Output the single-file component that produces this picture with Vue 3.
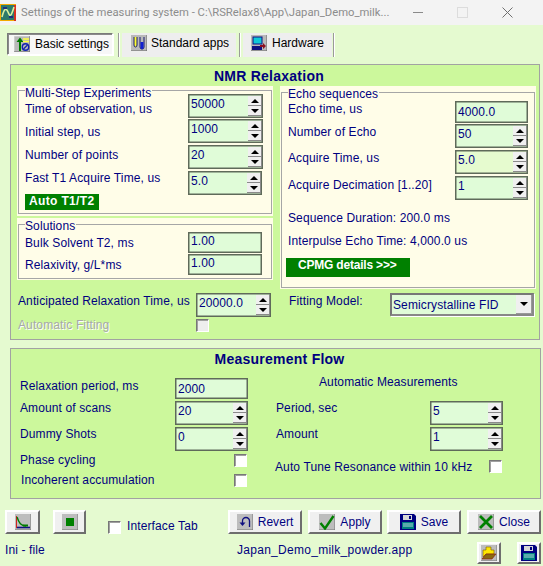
<script setup>
const multi = [
  { v: '50000', c: 'tight' },
  { v: '1000', c: '' },
  { v: '20', c: '' },
  { v: '5.0', c: 'narrow' }
]
const echo = [
  { l: 'Number of Echo', v: '50', c: '' },
  { l: 'Acquire Time, us', v: '5.0', c: 'yellowish' },
  { l: 'Acquire Decimation [1..20]', v: '1', c: 'low' }
]
</script>

<template>
  <div class="win">
    <header class="titlebar">
      <svg class="appicon" width="16" height="17" viewBox="0 0 16 17">
        <rect x="0" y="0" width="16" height="17" fill="#f2a900" />
        <rect x="1" y="1" width="14" height="15" fill="#2d7a6a" />
        <rect x="14" y="1" width="2" height="16" fill="#d83020" />
        <path d="M2 13 C4 5 6 3 8 8 S11 13 14 3" fill="none" stroke="#d9f0a0" stroke-width="1.6" />
        <path d="M3 4h4M9 13h4" stroke="#1c2f80" stroke-width="2" />
      </svg>
      <span class="title-text">Settings of the measuring system - C:\RSRelax8\App\Japan_Demo_milk...</span>
      <i class="wc-min"></i>
      <i class="wc-max"></i>
      <svg class="wc-close" width="11" height="11" viewBox="0 0 11 11"><path d="M.5.5l10 10M10.5.5l-10 10" stroke="#6f6f6f" fill="none" /></svg>
    </header>

    <nav class="tabs">
      <div class="tab active">
        <svg class="ico" viewBox="0 0 16 16">
          <rect width="16" height="16" fill="#b9b9b9" /><path d="M0 16V0h16" fill="none" stroke="#dedede" /><path d="M16 0v16H0" fill="none" stroke="#6b6b6b" />
          <path d="M5 15V6H2.500L6 1.500 9.500 6H7v9z" fill="#007a00" />
          <path d="M9 3h6M9 5.500h6" stroke="#ffff40" stroke-width="1.400" />
          <circle cx="11.500" cy="11" r="3.200" fill="none" stroke="#1020b0" stroke-width="1.400" /><path d="M9.500 13l4-4" stroke="#1020b0" stroke-width="1.200" />
        </svg>
        <span>Basic settings</span>
      </div>
      <i class="tabsep s1"></i>
      <div class="tab std">
        <svg class="ico" viewBox="0 0 16 16">
          <rect width="16" height="16" fill="#b9b9b9" /><path d="M16 0v16H0" fill="none" stroke="#6b6b6b" />
          <path d="M3 2v8a1.500 2 0 0 0 3 0V2" fill="#ffff30" stroke="#1a1a70" />
          <path d="M9 2v10a2 2 0 0 0 4 0V2" fill="none" stroke="#1a1a70" />
          <path d="M9.500 7h3v6l-1.500 1.500L9.500 13z" fill="#1020d0" />
        </svg>
        <span>Standard apps</span>
      </div>
      <i class="tabsep s2"></i>
      <div class="tab hw">
        <svg class="ico" viewBox="0 0 16 16">
          <rect width="16" height="16" fill="#b9b9b9" /><path d="M16 0v16H0" fill="none" stroke="#6b6b6b" />
          <rect x="2" y="2" width="9" height="7" fill="#10c8d8" stroke="#101080" />
          <rect x="1" y="11" width="10" height="4" fill="#101080" />
          <path d="M9 10h3V8l3 3-3 3v-2H9z" fill="#8a1020" />
        </svg>
        <span>Hardware</span>
      </div>
      <i class="tabsep s3"></i>
    </nav>

    <section class="panel relax">
      <h2 class="ptitle nmr">NMR Relaxation</h2>
      <div class="groups">
        <div class="leftgroups">
          <div class="group g-multi">
            <div class="fs multi">
              <div class="col-labels">
                <div class="legend l5">Multi-Step Experiments</div>
                <div class="lbl">Time of observation, us</div>
                <div class="lbl">Initial step, us</div>
                <div class="lbl">Number of points</div>
                <div class="lbl">Fast T1 Acquire Time, us</div>
                <div class="gbtn auto">Auto T1/T2</div>
              </div>
              <div class="col-spins">
                <div v-for="s in multi" :key="s.v" class="spin" :class="s.c">
                  <span class="val">{{ s.v }}</span>
                  <div class="arrows"><b class="up"></b><b class="down"></b></div>
                </div>
              </div>
            </div>
          </div>
          <div class="group g-sol">
            <div class="fs sol">
              <div class="col-labels">
                <div class="legend l6">Solutions</div>
                <div class="lbl">Bulk Solvent T2, ms</div>
                <div class="lbl">Relaxivity, g/L*ms</div>
              </div>
              <div class="col-fields">
                <div class="field"><span class="val">1.00</span></div>
                <div class="field"><span class="val">1.00</span></div>
              </div>
            </div>
          </div>
        </div>

        <div class="group g-echo">
          <div class="fs echo">
            <div class="legend l6">Echo sequences</div>
            <div class="echo-grid">
              <div class="lbl e1">Echo time, us</div>
              <div class="field ef"><span class="val">4000.0</span></div>
              <template v-for="e in echo" :key="e.l">
                <div class="lbl" :class="e.c === 'low' ? 'e2' : 'e1'">{{ e.l }}</div>
                <div class="spin wide" :class="e.c">
                  <span class="val">{{ e.v }}</span>
                  <div class="arrows"><b class="up"></b><b class="down"></b></div>
                </div>
              </template>
            </div>
            <div class="lbl seq">Sequence Duration: 200.0 ms</div>
            <div class="lbl inter">Interpulse Echo Time: 4,000.0 us</div>
            <div class="gbtn cpmg">CPMG details &gt;&gt;&gt;</div>
          </div>
        </div>
      </div>

      <div class="under">
        <div class="under-left">
          <div class="lbl a1">Anticipated Relaxation Time, us</div>
          <div class="spin">
            <span class="val">20000.0</span>
            <div class="arrows"><b class="up"></b><b class="down"></b></div>
          </div>
          <div class="lbl disabled">Automatic Fitting</div>
          <i class="chk dis"></i>
        </div>
        <div class="under-right">
          <div class="lbl fit">Fitting Model:</div>
          <div class="combo">
            <span>Semicrystalline FID</span>
            <b class="combo-btn"><i class="tri"></i></b>
          </div>
        </div>
      </div>
    </section>

    <section class="panel flow">
      <h2 class="ptitle ft">Measurement Flow</h2>
      <div class="flow-cols">
        <div class="flow-left">
          <div class="lbl t1">Relaxation period, ms</div>
          <div class="field f21"><span class="val">2000</span></div>
          <div class="lbl">Amount of scans</div>
          <div class="spin wide"><span class="val">20</span><div class="arrows"><b class="up"></b><b class="down"></b></div></div>
          <div class="lbl">Dummy Shots</div>
          <div class="spin wide"><span class="val">0</span><div class="arrows"><b class="up"></b><b class="down"></b></div></div>
          <div class="lbl">Phase cycling</div>
          <i class="chk endr"></i>
          <div class="lbl botm">Incoherent accumulation</div>
          <i class="chk endr"></i>
        </div>
        <div class="flow-right">
          <div class="lbl am-head">Automatic Measurements</div>
          <div class="am-grid">
            <div class="lbl">Period, sec</div>
            <div class="spin wide"><span class="val">5</span><div class="arrows"><b class="up"></b><b class="down"></b></div></div>
            <div class="lbl">Amount</div>
            <div class="spin wide"><span class="val">1</span><div class="arrows"><b class="up"></b><b class="down"></b></div></div>
          </div>
          <div class="tune">
            <span class="lbl">Auto Tune Resonance within 10 kHz</span>
            <i class="chk"></i>
          </div>
        </div>
      </div>
    </section>

    <div class="actions">
      <div class="btn b-chart">
        <svg class="ico" viewBox="0 0 16 16">
          <rect width="16" height="16" fill="#bdbdbd" /><path d="M16 0v16H0" fill="none" stroke="#777" />
          <path d="M1.500 13.500H15" stroke="#101080" stroke-width="1.600" />
          <path d="M1.500 2v12" stroke="#d02020" />
          <path d="M2 3 C4 9 6 12 11 12" fill="none" stroke="#007a00" stroke-width="1.400" />
          <path d="M8 11.500h5" stroke="#007a00" stroke-width="2" />
        </svg>
      </div>
      <div class="btn b-stop">
        <svg class="ico" viewBox="0 0 16 16">
          <rect width="16" height="16" fill="#bdbdbd" /><path d="M16 0v16H0" fill="none" stroke="#777" />
          <rect x="4" y="4" width="8" height="8" fill="#008000" />
        </svg>
      </div>
      <label class="itab"><i class="chk"></i><span class="lbl">Interface Tab</span></label>
      <div class="btn act revert">
        <svg class="ico" viewBox="0 0 16 16">
          <rect width="16" height="16" fill="#bdbdbd" /><path d="M16 0v16H0" fill="none" stroke="#777" />
          <path d="M12.500 13V7a3.500 3.500 0 0 0-7 0v2" fill="none" stroke="#101080" stroke-width="1.300" />
          <path d="M2.500 8.500h6L5.500 12z" fill="#101080" />
        </svg>
        <span>Revert</span>
      </div>
      <div class="btn act apply">
        <svg class="ico" viewBox="0 0 16 16">
          <rect width="16" height="16" fill="#bdbdbd" /><path d="M16 0v16H0" fill="none" stroke="#777" />
          <path d="M1.500 9l4.500 5.500L14.500 2" fill="none" stroke="#008000" stroke-width="2.400" />
        </svg>
        <span>Apply</span>
      </div>
      <div class="btn act save">
        <svg class="ico" viewBox="0 0 16 16">
          <path d="M0 0h14l2 2v14H0z" fill="#000080" />
          <rect x="3" y="1" width="9" height="5" fill="#d8d8d8" />
          <rect x="9" y="2" width="2" height="3" fill="#000080" />
          <rect x="2" y="8" width="12" height="7" fill="#008080" />
          <path d="M3 10h10M3 12h10" stroke="#b0d8d8" />
        </svg>
        <span>Save</span>
      </div>
      <div class="btn act close">
        <svg class="ico" viewBox="0 0 16 16">
          <rect width="16" height="16" fill="#bdbdbd" /><path d="M16 0v16H0" fill="none" stroke="#777" />
          <path d="M2 2l12 12M14 2L2 14" stroke="#008000" stroke-width="2.800" />
        </svg>
        <span>Close</span>
      </div>
    </div>

    <div class="footer">
      <span class="lbl ini">Ini - file</span>
      <span class="lbl fname">Japan_Demo_milk_powder.app</span>
      <div class="btn small first">
        <svg class="ico" viewBox="0 0 16 16">
          <rect width="16" height="16" fill="#bdbdbd" /><path d="M16 0v16H0" fill="none" stroke="#777" />
          <path d="M2 12V5h3V2h5v3h3v4H5z" fill="#ffe800" stroke="#7a5a00" stroke-width=".6" />
          <path d="M1 14l4-5h10l-4 5z" fill="#8a6a10" stroke="#8a1010" stroke-width=".6" />
        </svg>
      </div>
      <div class="btn small">
        <svg class="ico" viewBox="0 0 16 16">
          <path d="M0 0h14l2 2v14H0z" fill="#000080" />
          <rect x="3" y="1" width="9" height="5" fill="#d8d8d8" />
          <rect x="9" y="2" width="2" height="3" fill="#000080" />
          <rect x="2" y="8" width="12" height="7" fill="#008080" />
          <path d="M3 10h10M3 12h10" stroke="#b0d8d8" />
        </svg>
      </div>
    </div>
  </div>
</template>

<style scoped>
.win {
  width: 543px;
  height: 566px;
  overflow: hidden;
  background: #e5fad0;
  font: 12px/14px "Liberation Sans", Arial, sans-serif;
  color: #000080;
}
.titlebar {
  height: 25px;
  background: #f3f3f3;
  display: flex;
  align-items: center;
  color: #8c8c8c;
}
.appicon { margin: 0 5px 0 0; flex: none; }
.title-text { font: 11.25px Roboto, sans-serif; width: 392px; white-space: nowrap; }
.wc-min { width: 10px; height: 1px; background: #8a8a8a; margin-left: 0; }
.wc-max { width: 9px; height: 9px; border: 1px solid #dcdcdc; margin-left: 34px; }
.wc-close { margin-left: 34px; }

.tabs { height: 39px; display: flex; align-items: flex-start; padding: 8px 0 0 7px; box-sizing: border-box; color: #000; }
.tab { display: flex; align-items: center; box-sizing: border-box; background: #eeeeee; white-space: nowrap; flex: none; }
.tab.active { width: 106px; height: 22px; padding-left: 6px; gap: 5px; background: #f7f7f7; border: 1px solid #7a7a7a; border-right-color: #fff; border-bottom-color: #fff; box-shadow: inset 1px 1px 0 #8a8a8a, 1px 1px 0 #fff; }
.tab.std { width: 114px; height: 24px; padding-left: 9px; gap: 4px; }
.tab.hw { width: 89px; height: 24px; padding-left: 8px; gap: 5px; }
.tab.std, .tab.hw { align-items: flex-start; padding-top: 2px; }
.tab.std span, .tab.hw span { line-height: 16px; }
.tabsep { width: 1px; height: 24px; background: #9a9a9a; border-right: 1px solid #fff; flex: none; }
.s1 { margin: 0 2px 0 5px; }
.s2 { margin: 0 2px 0 3px; }
.s3 { margin: 0 0 0 1px; }
.ico { width: 16px; height: 16px; flex: none; }

.panel {
  box-sizing: border-box;
  border: 1px solid #a2a2a2;
  background: #ccf89c;
  margin-left: 10px;
}
.relax { width: 530px; height: 276px; }
.flow { width: 531px; height: 151px; margin-top: 8px; }
.ptitle { margin: 0; font: bold 14px/21px "Liberation Sans", Arial, sans-serif; text-align: center; letter-spacing: .25px; }
.nmr { padding-right: 12px; height: 21px; line-height: 23px; }

.groups { display: grid; grid-template-columns: 256px 256px; gap: 7px; padding-left: 6px; height: 203px; }
.leftgroups { display: flex; flex-direction: column; gap: 2px; }
.group { background: #fffde8; box-sizing: border-box; padding: 4px 1px 2px; display: flex; }
.g-multi { height: 130px; }
.g-sol { height: 62px; padding-top: 6px; padding-bottom: 1px; }
.g-echo { height: 203px; padding-top: 6px; padding-bottom: 1px; }
.fs { border: 1px solid #a6a6a6; flex: 1; box-sizing: border-box; min-width: 0; }
.legend { width: fit-content; background: #fffde8; padding-right: 1px; letter-spacing: .1px; }
.l5 { margin-top: -5px; }
.l6 { margin-top: -6px; }
.lbl { letter-spacing: .12px; white-space: nowrap; }
.lbl.fname { letter-spacing: .28px; }

.multi { display: grid; padding-left: 6px; grid-template-columns: 163px 75px; }
.col-labels { display: flex; flex-direction: column; gap: 9px; }
.multi .legend { margin-bottom: -7px; }
.col-spins { display: flex; flex-direction: column; gap: 2px; padding-top: 3px; }
.spin, .field {
  box-sizing: border-box;
  display: flex;
  background: #e0fcd8;
  border: 1px solid #5f6a5a;
  box-shadow: inset 0 0 0 .5px #5f6a5a;
  height: 24px;
  width: 75px;
  color: #000080;
}
.spin.tight { margin-bottom: -1px; }
.spin.narrow { width: 74px; }
.spin.wide { width: 73px; }
.spin.yellowish { background: #e6fbcf; }
.val { flex: 1; padding-left: 2px; line-height: 19px; letter-spacing: .1px; }
.arrows { display: flex; flex-direction: column; width: 14px; gap: 0; padding-top: 1px; }
.arrows b { height: 10px; width: 14px; background: #f0f0f0; border-right: 1px solid #8a8a8a; border-bottom: 1px solid #8a8a8a; box-sizing: border-box; display: flex; align-items: center; justify-content: center; }
.arrows b::after { content: ""; border-left: 4px solid transparent; border-right: 4px solid transparent; }
.arrows .up::after { border-bottom: 4px solid #000; }
.arrows .down::after { border-top: 4px solid #000; }

.gbtn { background: #008000; color: #fff; font-weight: bold; box-sizing: border-box; }
.auto { width: 74px; height: 16px; line-height: 14px; padding-left: 4px; letter-spacing: .35px; }

.sol { display: grid; grid-template-columns: 163px 74px; padding-left: 6px; }
.sol .legend { margin-bottom: -5px; }
.sol .col-labels { gap: 8px; }
.col-fields { display: flex; flex-direction: column; gap: 1px; padding-top: 7px; }
.field { height: 21px; width: 74px; }
.col-fields .val { line-height: 17px; }

.echo { padding-left: 6px; }
.echo-grid { display: grid; grid-template-columns: 167px 73px; grid-template-rows: 21px 24px 24px 24px; row-gap: 2px; }
.e1 { margin-top: 1px; }
.e2 { margin-top: 2px; }
.ef { height: 22px; width: 73px; }
.ef .val { line-height: 21px; }
.seq { margin-top: 11px; }
.inter { margin-top: 9px; }
.cpmg { width: 124px; height: 19px; margin: 10px 0 0 -2px; padding-left: 12px; line-height: 15px; letter-spacing: -.2px; }

.under { display: grid; grid-template-columns: 263px 1fr; margin-top: 4px; }
.under-left { display: grid; grid-template-columns: 178px 75px; grid-template-rows: 24px 13px; row-gap: 2px; padding-left: 7px; }
.a1 { margin-top: 1px; }
.disabled { color: #a8a8a8; text-shadow: 1px 1px 0 #fff; margin-top: -1px; }
.chk { display: block; width: 13px; height: 13px; box-sizing: border-box; background: #fff; border: 1px solid #fff; border-top-color: #777; border-left-color: #777; box-shadow: inset 1px 1px 0 #a0a0a0; }
.chk.dis { background: #eeeeee; }
.under-right { display: flex; align-items: flex-start; padding-left: 15px; }
.fit { width: 101px; margin-top: 1px; flex: none; }
.combo { box-sizing: border-box; width: 144px; flex: none; height: 23px; background: #e0fcd8; border: 2px solid #777; border-right-color: #888; border-bottom-color: #888; box-shadow: 1px 1px 0 #fff; display: flex; align-items: center; justify-content: space-between; padding-left: 1px; letter-spacing: .12px; }
.combo-btn { width: 16px; height: 19px; background: #f0f0f0; border-right: 1px solid #999; border-bottom: 1px solid #999; box-sizing: border-box; display: flex; align-items: center; justify-content: center; }
.tri { border-left: 4px solid transparent; border-right: 4px solid transparent; border-top: 4px solid #000; }

.ft { line-height: 14px; margin-top: 3px; height: 26px; padding-left: 8px; }
.flow-cols { display: grid; grid-template-columns: 228px 227px; gap: 27px; padding-left: 9px; }
.flow-left { display: grid; grid-template-columns: 155px 73px; grid-template-rows: 21px 24px 24px 14px 18px; row-gap: 2px; }
.f21 { height: 21px; width: 73px; }
.f21 .val { line-height: 20px; }
.t1 { margin-top: 1px; }
.flow-left .chk { align-self: end; justify-self: end; margin-right: 1px; }
.botm { align-self: end; margin-left: 1px; }
.am-head { margin: -3px 0 12px 44px; }
.am-grid { display: grid; grid-template-columns: 154px 73px; row-gap: 2px; padding-left: 1px; }
.tune { display: flex; justify-content: space-between; margin-top: 9px; width: 227px; }

.actions { display: flex; margin-top: 11px; padding-left: 5px; height: 24px; }
.btn {
  box-sizing: border-box;
  background: #f0f0f0;
  border: 2px solid;
  border-color: #fff #6e6e6e #6e6e6e #fff;
  display: flex;
  align-items: center;
  justify-content: center;
  height: 24px;
  flex: none;
}
.b-chart { width: 35px; }
.b-stop { width: 33px; margin-left: 13px; }
.itab { display: flex; align-items: flex-end; gap: 6px; margin-left: 22px; width: 120px; height: 24px; }
.itab .lbl { margin-bottom: 1px; }
.act { width: 74px; gap: 5px; letter-spacing: .05px; }
.apply { margin-left: 6px; }
.save { margin-left: 5px; }
.close { margin-left: 6px; }

.footer { display: flex; align-items: flex-start; padding: 8px 0 0 5px; }
.ini { margin-top: 1px; width: 232px; }
.fname { margin-top: 1px; width: 240px; }
.small { width: 24px; height: 22px; }
.first { margin-right: 16px; }
</style>

<style>
html, body { margin: 0; background: #e5fad0; overflow: hidden; }
</style>
